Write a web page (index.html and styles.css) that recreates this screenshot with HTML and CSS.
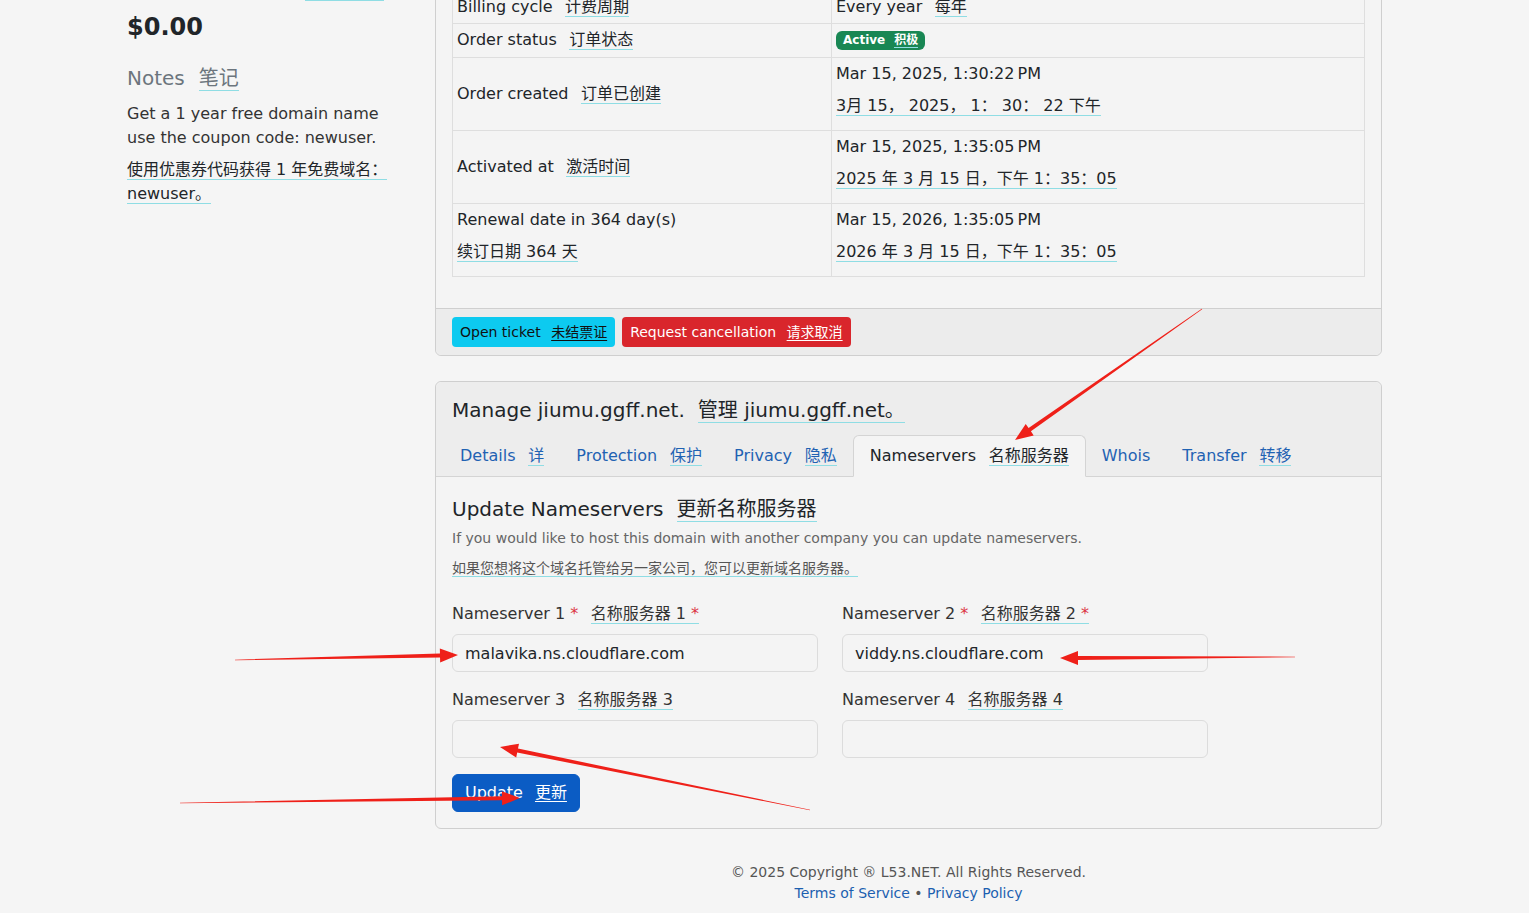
FILE: index.html
```html
<!DOCTYPE html>
<html lang="en">
<head>
<meta charset="utf-8">
<title>Manage jiumu.ggff.net</title>
<link rel="stylesheet" href="styles.css">
</head>
<body>
<div class="page">
  <aside class="side">
    <div class="prev-line"></div>
    <div class="price">$0.00</div>
    <div class="notes-title">Notes<span class="tr">笔记</span></div>
    <div class="notes-text">Get a 1 year free domain name use the coupon code: newuser.</div>
    <div class="trl"><span class="u">使用优惠券代码获得 1 年免费域名： newuser。</span></div>
  </aside>

  <main class="main">
    <section class="card">
      <div class="card-body">
        <table class="info">
          <tr>
            <td class="c1">Billing cycle<span class="tr">计费周期</span></td>
            <td>Every year<span class="tr">每年</span></td>
          </tr>
          <tr class="status-row">
            <td class="c1">Order status<span class="tr">订单状态</span></td>
            <td><span class="badge">Active<span class="tr">积极</span></span></td>
          </tr>
          <tr>
            <td class="c1">Order created<span class="tr">订单已创建</span></td>
            <td>
              <div>Mar 15, 2025, 1:30:22&#8239;PM</div>
              <div class="trl"><span class="u">3月 15， 2025， 1： 30： 22 下午</span></div>
            </td>
          </tr>
          <tr>
            <td class="c1">Activated at<span class="tr">激活时间</span></td>
            <td>
              <div>Mar 15, 2025, 1:35:05&#8239;PM</div>
              <div class="trl"><span class="u">2025 年 3 月 15 日，下午 1：35：05</span></div>
            </td>
          </tr>
          <tr>
            <td class="c1">
              <div>Renewal date in 364 day(s)</div>
              <div class="trl"><span class="u">续订日期 364 天</span></div>
            </td>
            <td>
              <div>Mar 15, 2026, 1:35:05&#8239;PM</div>
              <div class="trl"><span class="u">2026 年 3 月 15 日，下午 1：35：05</span></div>
            </td>
          </tr>
        </table>
      </div>
      <div class="card-footer">
        <a class="btn btn-info" href="#">Open ticket<span class="btr">未结票证</span></a>
        <a class="btn btn-danger" href="#">Request cancellation<span class="btr">请求取消</span></a>
      </div>
    </section>

    <section class="card card2">
      <div class="card-header">
        <div class="manage-title">Manage jiumu.ggff.net.<span class="tr">管理 jiumu.ggff.net。</span></div>
        <nav class="tabs">
          <a class="tab" href="#">Details<span class="tr">详</span></a>
          <a class="tab" href="#">Protection<span class="tr">保护</span></a>
          <a class="tab" href="#">Privacy<span class="tr">隐私</span></a>
          <a class="tab active" href="#">Nameservers<span class="tr">名称服务器</span></a>
          <a class="tab" href="#">Whois</a>
          <a class="tab" href="#">Transfer<span class="tr">转移</span></a>
        </nav>
      </div>
      <div class="card-body body2">
        <h2 class="ns-title">Update Nameservers<span class="tr">更新名称服务器</span></h2>
        <div class="desc">If you would like to host this domain with another company you can update nameservers.</div>
        <div class="desc desc-tr"><span class="u">如果您想将这个域名托管给另一家公司，您可以更新域名服务器。</span></div>
        <form class="ns-form">
          <div class="field">
            <label>Nameserver 1 <span class="req">*</span><span class="tr">名称服务器 1 <span class="req">*</span></span></label>
            <input type="text" value="malavika.ns.cloudflare.com">
          </div>
          <div class="field">
            <label>Nameserver 2 <span class="req">*</span><span class="tr">名称服务器 2 <span class="req">*</span></span></label>
            <input type="text" value="viddy.ns.cloudflare.com">
          </div>
          <div class="field">
            <label>Nameserver 3<span class="tr">名称服务器 3</span></label>
            <input type="text" value="">
          </div>
          <div class="field">
            <label>Nameserver 4<span class="tr">名称服务器 4</span></label>
            <input type="text" value="">
          </div>
        </form>
        <button class="btn-primary" type="button">Update<span class="btr">更新</span></button>
      </div>
    </section>

    <footer class="foot">
      <div>© 2025 Copyright ® L53.NET. All Rights Reserved.</div>
      <div><a href="#">Terms of Service</a> • <a href="#">Privacy Policy</a></div>
    </footer>
  </main>
</div>

<svg class="arrows" width="1529" height="913" viewBox="0 0 1529 913" aria-hidden="true">
  <g fill="#ef2019">
    <polygon points="1201.8,308.8 1028.6,428.0 1025.7,424.0 1015,440 1033.7,435.4 1030.9,431.3 1202.2,309.2"/>
    <polygon points="235,660.3 440.04,657.4 440.16,662.4 458,655 439.84,648.4 439.96,653.4 235,659.7"/>
    <polygon points="1295,656.7 1078,655.9 1078,650.9 1060,658 1078,664.9 1078,659.9 1295,657.3"/>
    <polygon points="810.06,809.7 518.0,748.6 519.0,743.7 500,747 516.2,757.5 517.2,752.6 809.94,810.3"/>
    <polygon points="180,803.3 502,800.3 502.1,805.3 520,798 501.9,791.3 502,796.3 180,802.7"/>
  </g>
</svg>
</body>
</html>
```

FILE: styles.css
```css
html, body {
  margin: 0;
  padding: 0;
}

body {
  position: relative;
  width: 1529px;
  height: 913px;
  overflow: hidden;
  background: #f5f5f5;
  color: #212529;
  font-family: "DejaVu Sans", "Noto Sans CJK SC", sans-serif;
  font-size: 16px;
  line-height: 24px;
}

a {
  text-decoration: none;
}

.page {
  display: flex;
  gap: 38px;
  padding-left: 127px;
  margin-top: -27px;
}

/* translation spans */
.tr {
  margin-left: 0.78em;
  border-bottom: 1px solid #8fdde4;
}

.u {
  border-bottom: 1px solid #8fdde4;
}

.trl {
  margin-top: 8px;
}

/* left column */
.side {
  width: 270px;
  flex: none;
  padding-top: 27px;
}

.prev-line {
  width: 79px;
  height: 1px;
  margin-left: 178px;
  background: #8fdde4;
}

.price {
  margin-top: 12px;
  font-size: 24px;
  line-height: 29px;
  font-weight: bold;
}

.notes-title {
  margin-top: 24px;
  font-size: 20px;
  line-height: 24px;
  color: #6c757d;
}

.notes-title .tr {
  margin-left: 0.7em;
}

.notes-text {
  margin-top: 12px;
  color: #333;
}

/* main column */
.main {
  width: 947px;
  flex: none;
}

.card {
  background: #f4f4f4;
  border: 1px solid #cfcfcf;
  border-radius: 6px;
}

.card2 {
  margin-top: 25px;
}

.card-body {
  padding: 16px;
}

.body2 {
  padding-top: 17px;
}

.info {
  width: 100%;
  border-collapse: collapse;
  margin-bottom: 15px;
}

.info td {
  border: 1px solid #dedede;
  padding: 4px 4px;
  vertical-align: middle;
  line-height: 24px;
}

.info .status-row td {
  padding-bottom: 5px;
}

.info td.c1 {
  width: 370px;
}

.info .trl {
  margin-bottom: 8px;
}

.badge {
  display: inline-block;
  background: #198754;
  color: #fff;
  font-size: 12px;
  line-height: 13px;
  font-weight: bold;
  padding: 3px 7px;
  border-radius: 6px;
  vertical-align: 1px;
}

.badge .tr {
  margin-left: 0.75em;
}

.card-footer {
  display: flex;
  gap: 7px;
  background: #ececec;
  border-top: 1px solid #cfcfcf;
  padding: 8px 16px;
  border-radius: 0 0 6px 6px;
}

.btn {
  display: inline-block;
  font-size: 14px;
  line-height: 22px;
  padding: 4px 8px;
  border-radius: 4px;
}

.btr {
  margin-left: 0.75em;
  text-decoration: underline;
  text-underline-offset: 3px;
}

.btn-info {
  background: #0dcaf0;
  color: #111;
}

.btn-danger {
  background: #d9262c;
  color: #fff;
}

/* card 2 header */
.card-header {
  background: #ededed;
  border-bottom: 1px solid #d4d4d4;
  padding: 16px 16px 0;
  border-radius: 6px 6px 0 0;
}

.manage-title {
  font-size: 20px;
  line-height: 24px;
  margin-bottom: 13px;
}

.manage-title .tr {
  margin-left: 0.65em;
}

.tabs {
  display: flex;
  margin-left: -8px;
  margin-bottom: -1px;
}

.tab {
  padding: 8px 15px;
  border: 1px solid transparent;
  border-radius: 6px 6px 0 0;
  color: #1f62b3;
  line-height: 24px;
}

.tab .tr {
  margin-left: 0.8em;
}

.tab.active {
  padding: 8px 16px;
  background: #f4f4f4;
  border-color: #d4d4d4 #d4d4d4 #f4f4f4;
  color: #212529;
}

/* card 2 body */
.ns-title {
  margin: 0 0 4px;
  font-size: 20px;
  line-height: 30px;
  font-weight: normal;
}

.ns-title .tr {
  margin-left: 0.65em;
}

.desc {
  font-size: 14px;
  line-height: 21px;
  color: #666;
}

.desc-tr {
  margin-top: 9px;
  margin-bottom: 23px;
  color: #555;
}

.ns-form {
  display: grid;
  grid-template-columns: 366px 366px;
  column-gap: 24px;
  row-gap: 16px;
  margin: 0;
}

.field label {
  display: block;
  margin-bottom: 8px;
  color: #333;
}

.req {
  color: #dc3545;
}

.field input {
  display: block;
  box-sizing: border-box;
  width: 100%;
  height: 38px;
  padding: 6px 12px;
  border: 1px solid #dcdcdc;
  border-radius: 6px;
  background: #f4f4f4;
  color: #212529;
  font-family: "DejaVu Sans", "Noto Sans CJK SC", sans-serif;
  font-size: 16px;
  line-height: 24px;
}

.btn-primary {
  margin-top: 16px;
  display: inline-block;
  background: #0b5cc4;
  color: #fff;
  border: 1px solid #0b5cc4;
  border-radius: 6px;
  padding: 6px 12px;
  font-family: "DejaVu Sans", "Noto Sans CJK SC", sans-serif;
  font-size: 16px;
  line-height: 24px;
}

/* footer */
.foot {
  margin-top: 33px;
  text-align: center;
  font-size: 14px;
  line-height: 21px;
  color: #555;
}

.foot a {
  color: #1c5fb0;
}

/* annotation arrows (overlay) */
.arrows {
  position: absolute;
  top: 0;
  left: 0;
  pointer-events: none;
}
```
